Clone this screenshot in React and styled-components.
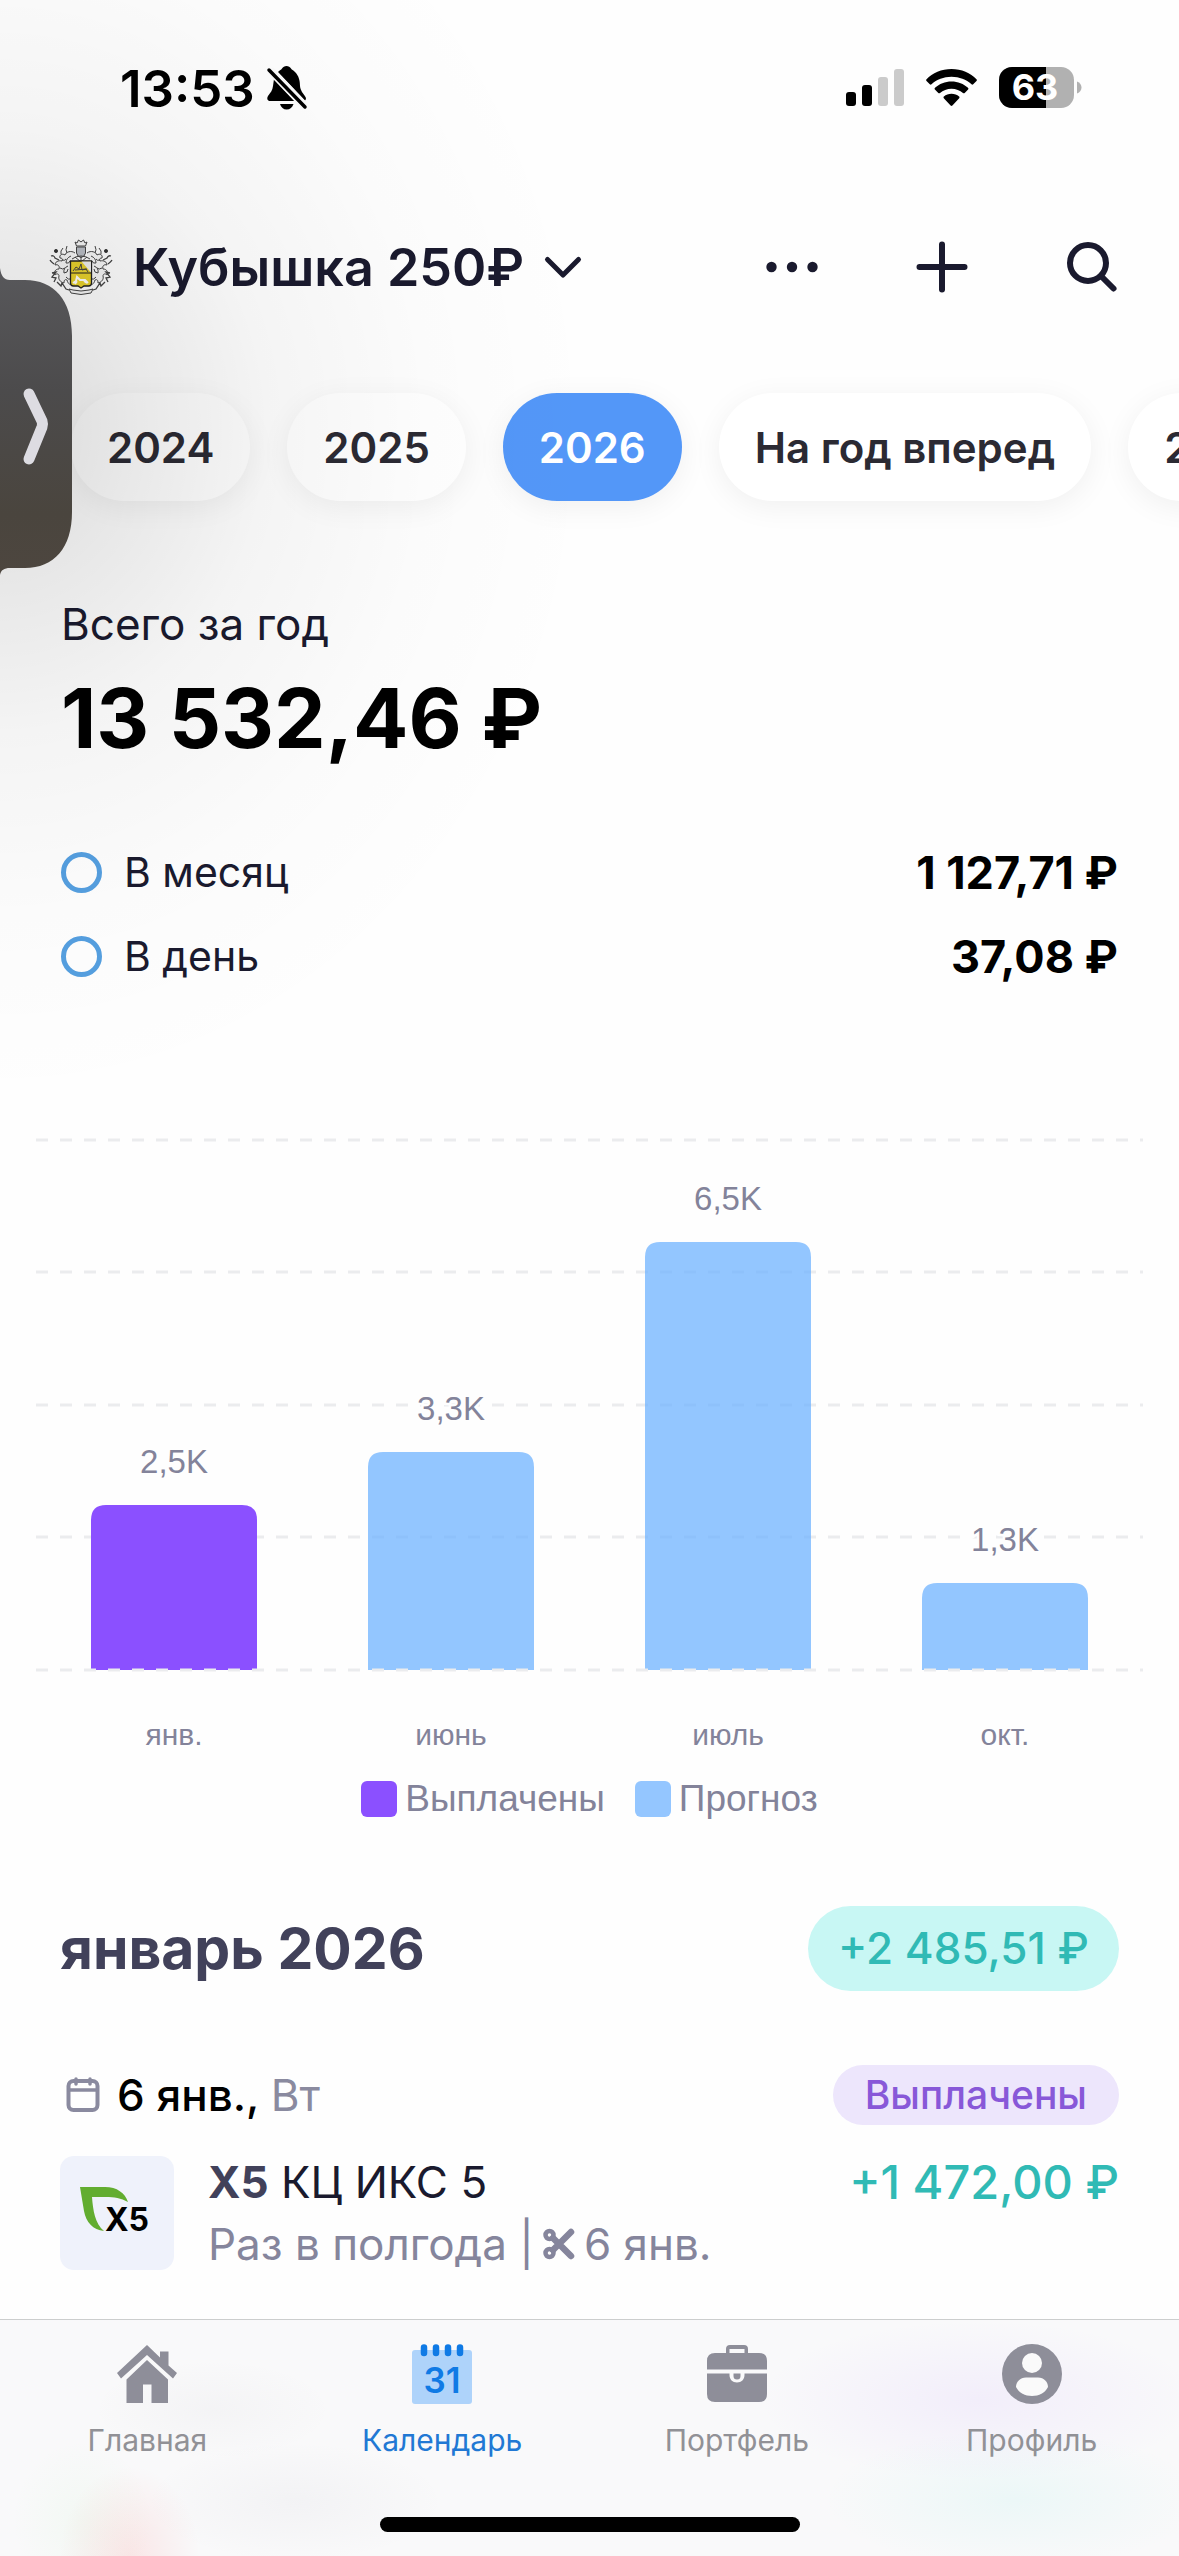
import React, { useState } from "react";
import styled, { createGlobalStyle } from "styled-components";

const years = ["2024", "2025", "2026", "На год вперед", "2027"];

const averages = [
  { id: "month", label: "В месяц", value: "1 127,71 ₽" },
  { id: "day", label: "В день", value: "37,08 ₽" },
];

const gridLines = [10, 142, 275, 407, 540];

const bars = [
  { month: "янв.", label: "2,5K", height: 165, paid: true },
  { month: "июнь", label: "3,3K", height: 218 },
  { month: "июль", label: "6,5K", height: 428 },
  { month: "окт.", label: "1,3K", height: 87 },
];

const tabs = [
  { label: "Главная", icon: <HomeIcon /> },
  { label: "Календарь", icon: <CalendarTabIcon />, active: true },
  { label: "Портфель", icon: <BriefcaseIcon /> },
  { label: "Профиль", icon: <ProfileIcon /> },
];

export default function App() {
  const [year, setYear] = useState("2026");

  return (
    <>
      <GlobalStyle />
      <Page>
        <StatusBar>
          <StatusGroup $gap="12px">
            <Clock>13:53</Clock>
            <BellOffIcon />
          </StatusGroup>
          <StatusGroup $gap="22px">
            <SignalIcon />
            <WifiIcon />
            <BatteryIcon />
          </StatusGroup>
        </StatusBar>

        <Header>
          <AccountButton type="button">
            <CrestIcon />
            <AccountName>Кубышка 250₽</AccountName>
            <svg width="38" height="24" viewBox="0 0 38 24" fill="none" aria-hidden="true">
              <path d="M3.500 4.500 19 20 34.500 4.500" stroke="#1a1a2e" strokeWidth="5" strokeLinecap="round" strokeLinejoin="round" />
            </svg>
          </AccountButton>
          <Actions>
            <IconButton type="button" aria-label="Ещё">
              <svg width="52" height="52" viewBox="0 0 52 52" fill="#1a1a2e">
                <circle cx="5.500" cy="26" r="5.200" />
                <circle cx="26" cy="26" r="5.200" />
                <circle cx="46.500" cy="26" r="5.200" />
              </svg>
            </IconButton>
            <IconButton type="button" aria-label="Добавить">
              <svg width="52" height="52" viewBox="0 0 52 52" stroke="#1a1a2e" strokeWidth="6" strokeLinecap="round">
                <path d="M26 3.500v45M3.500 26h45" />
              </svg>
            </IconButton>
            <IconButton type="button" aria-label="Поиск">
              <svg width="52" height="52" viewBox="0 0 52 52" fill="none" stroke="#1a1a2e" strokeWidth="6" strokeLinecap="round">
                <circle cx="22" cy="22" r="18" />
                <path d="M36 36 47.500 47.500" />
              </svg>
            </IconButton>
          </Actions>
        </Header>

        <Years>
          {years.map((item) => (
            <YearButton key={item} type="button" $active={item === year} onClick={() => setYear(item)}>
              {item}
            </YearButton>
          ))}
        </Years>

        <Summary>
          <SummaryLabel>Всего за год</SummaryLabel>
          <SummaryTotal>13 532,46 ₽</SummaryTotal>
          <Averages>
            {averages.map((item) => (
              <AverageRow key={item.id} htmlFor={item.id}>
                <Ring type="radio" name="average" id={item.id} />
                <AverageName>{item.label}</AverageName>
                <AverageValue>{item.value}</AverageValue>
              </AverageRow>
            ))}
          </Averages>
        </Summary>

        <ChartSection>
          <Chart />
          <Legend>
            <LegendItem>
              <Swatch $color="#8b50ff" />
              Выплачены
            </LegendItem>
            <LegendItem>
              <Swatch $color="#94c6ff" />
              Прогноз
            </LegendItem>
          </Legend>
        </ChartSection>

        <Payouts>
          <MonthRow>
            <MonthTitle>январь 2026</MonthTitle>
            <MonthTotal>+2 485,51 ₽</MonthTotal>
          </MonthRow>
          <DateRow>
            <SmallCalendarIcon />
            <DateText>
              6 янв., <span>Вт</span>
            </DateText>
            <PaidBadge>Выплачены</PaidBadge>
          </DateRow>
          <PayoutRow>
            <LogoBox>
              <X5Logo />
            </LogoBox>
            <PayoutInfo>
              <PayoutLine>
                <PayoutName>
                  <b>X5</b> КЦ ИКС 5
                </PayoutName>
                <PayoutAmount>+1 472,00 ₽</PayoutAmount>
              </PayoutLine>
              <PayoutDetails>
                <span>Раз в полгода |</span>
                <ScissorsIcon />
                <span>6 янв.</span>
              </PayoutDetails>
            </PayoutInfo>
          </PayoutRow>
        </Payouts>

        <TabBar>
          <Tabs>
            {tabs.map((tab) => (
              <Tab key={tab.label} href="#" $active={tab.active}>
                {tab.icon}
                {tab.label}
              </Tab>
            ))}
          </Tabs>
          <HomeIndicator />
        </TabBar>

        <Shade />
        <DrawerHandle type="button" aria-label="Открыть панель">
          <svg width="72" height="307" viewBox="0 0 72 307">
            <defs>
              <linearGradient id="handle" x1="0" y1="0" x2="0" y2="1">
                <stop offset="0" stopColor="#58585b" />
                <stop offset="0.400" stopColor="#4c4b4c" />
                <stop offset="0.800" stopColor="#4a453e" />
                <stop offset="1" stopColor="#4d463f" />
              </linearGradient>
            </defs>
            <path
              d="M0 0C1 8 4 12 10 12H25C54 12 72 32 72 68V244C72 280 54 300 25 300H10C4 300 1 302 0 307Z"
              fill="url(#handle)"
            />
            <path d="M29 126 42 153Q43 156 42 159L29 191" fill="none" stroke="#dddce2" strokeWidth="11" strokeLinecap="round" />
          </svg>
        </DrawerHandle>
      </Page>
    </>
  );
}

function Chart() {
  return (
    <ChartSvg viewBox="0 0 1107 626" role="img" aria-label="Выплаты по месяцам">
      {gridLines.slice(0, 4).map((y) => (
        <line key={y} x1="0" x2="1107" y1={y} y2={y} stroke="#ebecee" strokeWidth="3" strokeDasharray="12 12" />
      ))}
      {bars.map((bar, i) => {
        const x = 55 + i * 277;
        const top = 540 - bar.height;
        return (
          <g key={bar.month}>
            <path
              d={`M${x} 540V${top + 15}q0-15 15-15h136q15 0 15 15V540z`}
              fill={bar.paid ? "#8b50ff" : "#6fb3ff"}
              fillOpacity={bar.paid ? 1 : 0.75}
            />
            <BarLabel x={x + 83} y={top - 32}>{bar.label}</BarLabel>
            <AxisLabel x={x + 83} y="615">{bar.month}</AxisLabel>
          </g>
        );
      })}
      <line x1="0" x2="1107" y1="540" y2="540" stroke="#ebecee" strokeWidth="3" strokeDasharray="12 12" />
    </ChartSvg>
  );
}

// Icons
function BellOffIcon() {
  return (
    <svg width="40" height="44" viewBox="0 0 40 44" aria-hidden="true">
      <path d="M11 6C13 4 14 4 15 2.500 16 1 17.500 0 19.500 0S23 1 24 2.500C25 4 26 4 28 6c4 4 5 9 5 14 .500 5 3 7 5.500 11 .800 1.500 .500 2.700-.500 3.500z" />
      <path d="M7 13 27.500 35H3C.500 35-.500 32.500 1 30c2.500-3.500 4.500-5.500 5-10z" />
      <path d="M13 38H26.500C25.500 41.500 23 43.500 19.700 43.500S14 41.500 13 38Z" />
      <path d="M3 4 38 40.500" stroke="#fbfbfb" strokeWidth="8" />
      <path d="M2 4 38 41" stroke="#000" strokeWidth="3.500" strokeLinecap="round" />
    </svg>
  );
}

function SignalIcon() {
  return (
    <svg width="58" height="38" viewBox="0 0 58 38" aria-hidden="true">
      <rect x="0" y="23" width="10" height="14" rx="3" />
      <rect x="16" y="16" width="10" height="21" rx="3" />
      <rect x="32" y="8" width="10" height="29" rx="3" fill="#cbcbcb" />
      <rect x="48" y="0" width="10" height="37" rx="3" fill="#cbcbcb" />
    </svg>
  );
}

function WifiIcon() {
  return (
    <svg width="51" height="38" viewBox="0 0 51 38" aria-hidden="true">
      <path d="M25.500 0C35.500 0 44.500 4 50.500 10.300c.500 .500 .500 1.200 0 1.700l-3.300 3.300c-.500 .500-1.200 .500-1.700 0C40.300 10.600 33.300 7.800 25.500 7.800S10.700 10.600 5.500 15.300c-.500 .500-1.200 .500-1.700 0L.500 12C0 11.500 0 10.800 .500 10.300 6.500 4 15.500 0 25.500 0z" />
      <path d="M25.500 12.500c6.400 0 12.200 2.400 16.500 6.300 .500 .500 .600 1.200 .100 1.700l-3.400 3.400c-.500 .500-1.200 .500-1.700 .100-3-2.700-7.100-4.300-11.500-4.300s-8.500 1.600-11.500 4.300c-.500 .400-1.200 .400-1.700-.100L8.900 20.500c-.500-.500-.400-1.200 .100-1.700C13.300 14.900 19.100 12.500 25.500 12.500z" />
      <path d="M25.500 24.800c2.900 0 5.600 1 7.600 2.700 .500 .400 .500 1.200 .100 1.700l-6.800 7.300c-.500 .500-1.300 .500-1.800 0l-6.800-7.300c-.400-.500-.400-1.300 .100-1.700 2-1.700 4.700-2.700 7.600-2.700z" />
    </svg>
  );
}

function BatteryIcon() {
  return (
    <svg width="83" height="42" viewBox="0 0 83 42" role="img" aria-label="63%">
      <defs>
        <clipPath id="battery">
          <rect width="75" height="41" rx="13" />
        </clipPath>
      </defs>
      <g clipPath="url(#battery)">
        <rect width="75" height="41" fill="#b1b1b1" />
        <rect width="47" height="41" />
      </g>
      <path d="M78 14.500c3 1 4.500 3.500 4.500 6s-1.500 5-4.500 6z" fill="#b1b1b1" />
      <BatteryText x="36" y="33">63</BatteryText>
    </svg>
  );
}

function CrestIcon() {
  return (
    <svg width="64" height="56" viewBox="0 0 64 56" fill="none" stroke="#444" strokeWidth="1" aria-hidden="true">
      <g fill="#f6f6f6">
        <path d="M26 3l2 1 1.500-3 2.500 2 2.500-2L36 4l2-1-1.500 4h-9z" />
        <path d="M27.500 8h9v6q-1 4-4.500 4.500Q28.500 18 27.500 14z" fill="#b9bdc4" />
        <path d="M26 14c-4-3-9-1-10 2-3-2-6 0-5 3 2 0 3 1 2 3-4-1-7 1-7 4 3-1 5 1 4 4-4 0-5 3-4 6 2-2 4-1 4 1-1 3 1 6 5 7 0-3 1-4 3-3 1 4 3 5 5 4" />
        <path d="M38 14c4-3 9-1 10 2 3-2 6 0 5 3-2 0-3 1-2 3 4-1 7 1 7 4-3-1-5 1-4 4 4 0 5 3 4 6-2-2-4-1-4 1 1 3-1 6-5 7 0-3-1-4-3-3-1 4-3 5-5 4" />
      </g>
      <path d="M22 17q-5 2-5 7 3 1 4-2M19 27q-5 2-4 7 4 0 4-4M17 38q2 3 5 2M13 21q3 1 4-1M11 29q3 2 5 0M42 17q5 2 5 7-3 1-4-2M45 27q5 2 4 7-4 0-4-4M47 38q-2 3-5 2M51 21q-3 1-4-1M53 29q-3 2-5 0" />
      <path d="M2 17q3-1 4 2l4 2M5 25q-3-2-4-4M3 34l4-1-4 5 4 1-2 4M62 17q-3-1-4 2l-4 2M59 25q3-2 4-4M61 34l-4-1 4 5-4 1 2 4M8 43l4 4 1-3 4 6 3 1M56 43l-4 4-1-3-4 6-3 1" strokeWidth="1.300" />
      <path d="M14 9q-3 3-2 6M18 7q-2 4 0 7M50 9q3 3 2 6M46 7q2 4 0 7" />
      <path d="M23 20q4-3 9-3t9 3M26 18l6 5 6-5M32 18v5" />
      <circle cx="7" cy="12" r="1.600" fill="#333" />
      <circle cx="57" cy="12" r="1.600" fill="#333" />
      <path d="M21.500 22h21v22q0 3-3 3H35l-3 2-3-2h-4.500q-3 0-3-3z" fill="#e8d22c" stroke="#222" strokeWidth="1.300" />
      <path d="M32.500 22.500H42v11z" fill="#eee" stroke="none" />
      <path d="M21.500 34h21" stroke="#222" />
      <path d="M24 32l3-4 3 2 2-5 1 6 4-1 2 3M26 31l12-1" />
      <path d="M24 44l3-2 1-4 3 3h5l3 3M28 42l-2 3M35 42l3 2" stroke="#fff" strokeWidth="2" />
      <path d="M20 50l4 1q8 2 16 0l4-1-2 4q-10 3-20 0z" fill="#f6f6f6" />
    </svg>
  );
}

function SmallCalendarIcon() {
  return (
    <svg width="34" height="36" viewBox="0 0 34 36" fill="none" stroke="#8a8a9f" strokeWidth="4" strokeLinecap="round" aria-hidden="true">
      <rect x="2.500" y="4" width="29" height="29" rx="5" />
      <path d="M3 13H31M10 2V7M24 2V7" strokeWidth="3.500" />
    </svg>
  );
}

function X5Logo() {
  return (
    <svg width="114" height="114" viewBox="0 0 114 114" role="img" aria-label="X5">
      <path d="M20 31H45C57 31 65 37 68 46 61 42 54 41 46 41H32C33 54 35 68 44 75 33 74 26 66 24 55Z" fill="#62ad30" />
      <LogoText x="67" y="75">X5</LogoText>
    </svg>
  );
}

function ScissorsIcon() {
  return (
    <svg width="32" height="32" viewBox="0 0 32 32" fill="none" stroke="#85859c" strokeLinecap="round" aria-hidden="true">
      <circle cx="6.500" cy="7" r="4" strokeWidth="4.500" />
      <circle cx="6.500" cy="25" r="4" strokeWidth="4.500" />
      <path d="M10 10 28 28M10 22 28 4" strokeWidth="6.500" />
    </svg>
  );
}

function HomeIcon() {
  return (
    <svg width="60" height="60" viewBox="0 0 60 60" fill="#8e8e99" aria-hidden="true">
      <path d="M30 1 43 13.500V7.500H51.500V21.500L60 29 56 34.500 30 11 4 34.500 0 29Z" />
      <path d="M30 16 51 35.500V59H34.500V40.500H26V59H9.500V35.500Z" />
    </svg>
  );
}

function CalendarTabIcon() {
  return (
    <svg width="60" height="60" viewBox="0 0 60 60" aria-hidden="true">
      <rect y="6" width="60" height="54" rx="3" fill="#aed3fa" />
      <path d="M12 3.500V9M24 3.500V9M36 3.500V9M48 3.500V9" stroke="#0f7ae5" strokeWidth="6.500" strokeLinecap="round" />
      <CalendarText x="30" y="49">31</CalendarText>
    </svg>
  );
}

function BriefcaseIcon() {
  return (
    <svg width="60" height="60" viewBox="0 0 60 60" fill="#8e8e99" aria-hidden="true">
      <path d="M19 9V5Q19 1 23 1H37Q41 1 41 5V9H52Q60 9 60 17V25.500H0V17Q0 9 8 9ZM22.500 9H37.500V5H22.500Z" fillRule="evenodd" />
      <path d="M0 29.500H22.500V31C22.500 35.500 25.500 38.500 30 38.500S37.500 35.500 37.500 31V29.500H60V50Q60 58 52 58H8Q0 58 0 50Z" />
      <path d="M26.500 29.500H33.500V32Q33.500 35.500 30 35.500T26.500 32Z" />
    </svg>
  );
}

function ProfileIcon() {
  return (
    <svg width="60" height="60" viewBox="0 0 60 60" aria-hidden="true">
      <circle cx="30" cy="30" r="30" fill="#8e8e99" />
      <circle cx="30" cy="19" r="10" fill="#fafafa" />
      <path d="M24 33.500H36C42 33.500 46 38 46 43 43 49 37 52 30 52S17 49 14 43C14 38 18 33.500 24 33.500Z" fill="#fafafa" />
    </svg>
  );
}

const GlobalStyle = createGlobalStyle`
  *, *::before, *::after {
    box-sizing: border-box;
  }
  body {
    margin: 0;
    background: #fefefe;
    font-family: Inter, "Liberation Sans", sans-serif;
    color: #1a1a2e;
  }
  button {
    border: 0;
    padding: 0;
    background: none;
    font: inherit;
    color: inherit;
    cursor: pointer;
  }
  svg {
    display: block;
    flex-shrink: 0;
    overflow: visible;
  }
`;

const Page = styled.main`
  position: relative;
  display: flex;
  flex-direction: column;
  min-height: 100vh;
  overflow: hidden;
`;

const StatusBar = styled.div`
  display: flex;
  justify-content: space-between;
  align-items: center;
  height: 176px;
  padding: 0 97px 0 120px;
`;

const StatusGroup = styled.div`
  display: flex;
  align-items: center;
  gap: ${(props) => props.$gap};
`;

const Clock = styled.span`
  font-size: 51px;
  font-weight: 600;
  color: #000;
`;

const BatteryText = styled.text`
  font-size: 36px;
  font-weight: 700;
  fill: #fff;
  text-anchor: middle;
`;

const Header = styled.header`
  display: flex;
  justify-content: space-between;
  align-items: center;
  height: 182px;
  padding: 0 61px 0 49px;
`;

const AccountButton = styled.button`
  display: flex;
  align-items: center;
  gap: 20px;
`;

const AccountName = styled.span`
  font-size: 52px;
  font-weight: 600;
`;

const Actions = styled.div`
  display: flex;
  gap: 98px;
`;

const IconButton = styled.button`
  display: flex;
`;

const Years = styled.div`
  display: flex;
  gap: 37px;
  padding: 35px 0 35px 71px;
  overflow: hidden;
`;

const YearButton = styled.button`
  flex-shrink: 0;
  height: 108px;
  padding: 0 36px;
  border-radius: 54px;
  background: ${(props) => (props.$active ? "#5397f8" : "#fff")};
  color: ${(props) => (props.$active ? "#fff" : "#2b2a33")};
  font-size: 42px;
  font-weight: 600;
  box-shadow: 0 6px 30px rgba(0, 0, 0, 0.06);
`;

const Summary = styled.section`
  padding: 62px 61px 0;
`;

const SummaryLabel = styled.h2`
  margin: 0;
  font-size: 44px;
  line-height: 52px;
  font-weight: 400;
`;

const SummaryTotal = styled.p`
  margin: 21px 0 0;
  font-size: 82px;
  line-height: 96px;
  font-weight: 700;
  color: #000;
`;

const Averages = styled.div`
  margin-top: 63px;
`;

const AverageRow = styled.label`
  display: flex;
  align-items: center;
  height: 84px;
`;

const Ring = styled.input`
  appearance: none;
  width: 41px;
  height: 41px;
  margin: 0 22px 0 0;
  border: 5px solid #559fe0;
  border-radius: 50%;
`;

const AverageName = styled.span`
  font-size: 41px;
`;

const AverageValue = styled.span`
  margin-left: auto;
  font-size: 45px;
  font-weight: 700;
  color: #000;
`;

const ChartSection = styled.section`
  padding: 132px 36px 0;
`;

const ChartSvg = styled.svg`
  width: 100%;
  height: auto;
`;

const BarLabel = styled.text`
  font-family: "Liberation Sans", sans-serif;
  font-size: 33px;
  fill: #83839a;
  stroke: #fefefe;
  stroke-width: 5px;
  paint-order: stroke;
  text-anchor: middle;
`;

const AxisLabel = styled.text`
  font-family: "Liberation Sans", sans-serif;
  font-size: 30px;
  fill: #83839a;
  text-anchor: middle;
`;

const Legend = styled.div`
  display: flex;
  justify-content: center;
  gap: 30px;
  margin-top: 21px;
`;

const LegendItem = styled.div`
  display: flex;
  align-items: center;
  gap: 8px;
  font-family: "Liberation Sans", sans-serif;
  font-size: 37px;
  line-height: 44px;
  color: #83839a;
`;

const Swatch = styled.span`
  width: 36px;
  height: 36px;
  border-radius: 6px;
  background: ${(props) => props.$color};
`;

const Payouts = styled.section`
  padding: 85px 60px 44px;
`;

const MonthRow = styled.div`
  display: flex;
  justify-content: space-between;
  align-items: center;
`;

const MonthTitle = styled.h2`
  margin: 0;
  font-size: 57px;
  font-weight: 700;
  color: #41415a;
`;

const MonthTotal = styled.span`
  padding: 0 30px;
  border-radius: 43px;
  background: #c8f7f4;
  color: #30bab5;
  font-size: 44px;
  line-height: 85px;
  font-weight: 500;
`;

const DateRow = styled.div`
  display: flex;
  align-items: center;
  margin-top: 74px;
  padding-left: 6px;
`;

const DateText = styled.span`
  margin-left: 17px;
  font-size: 44px;
  font-weight: 500;
  color: #000;

  span {
    font-weight: 400;
    color: #8a8a9f;
  }
`;

const PaidBadge = styled.span`
  margin-left: auto;
  padding: 0 32px;
  border-radius: 30px;
  background: #ede6fc;
  color: #8858d8;
  font-size: 39px;
  line-height: 60px;
  font-weight: 500;
`;

const PayoutRow = styled.article`
  display: flex;
  align-items: center;
  gap: 34px;
  margin-top: 26px;
`;

const LogoBox = styled.div`
  border-radius: 14px;
  background: #eff2fb;
`;

const LogoText = styled.text`
  font-size: 32px;
  font-weight: 700;
  text-anchor: middle;
`;

const PayoutInfo = styled.div`
  flex: 1;
  line-height: 62px;
`;

const PayoutLine = styled.div`
  display: flex;
  justify-content: space-between;
`;

const PayoutName = styled.span`
  font-size: 44px;

  b {
    color: #41415a;
  }
`;

const PayoutAmount = styled.span`
  font-size: 47px;
  font-weight: 500;
  color: #30bab5;
`;

const PayoutDetails = styled.div`
  display: flex;
  align-items: center;
  gap: 9px;
  font-size: 44px;
  color: #85859c;
`;

const TabBar = styled.nav`
  display: flex;
  flex-direction: column;
  align-items: center;
  justify-content: space-between;
  height: 237px;
  margin-top: auto;
  padding: 24px 0;
  border-top: 1px solid #cccece;
  background:
    radial-gradient(70px 90px at 11% 100%, rgba(255, 90, 90, 0.12), transparent),
    radial-gradient(70px 80px at 7% 85%, rgba(120, 230, 120, 0.05), transparent),
    radial-gradient(150px 60px at 25% 77%, rgba(80, 80, 110, 0.04), transparent),
    radial-gradient(120px 50px at 18% 38%, rgba(80, 80, 100, 0.03), transparent),
    radial-gradient(220px 80px at 83% 34%, rgba(150, 90, 255, 0.07), transparent),
    radial-gradient(190px 70px at 86% 76%, rgba(60, 220, 210, 0.07), transparent),
    #f9f9fa;
`;

const Tabs = styled.div`
  display: flex;
  width: 100%;
`;

const Tab = styled.a`
  flex: 1;
  display: flex;
  flex-direction: column;
  align-items: center;
  gap: 16px;
  font-size: 30px;
  line-height: 40px;
  color: ${(props) => (props.$active ? "#2178d4" : "#919196")};
  text-decoration: none;
`;

const CalendarText = styled.text`
  font-size: 35px;
  font-weight: 600;
  fill: #0f7ae5;
  text-anchor: middle;
`;

const HomeIndicator = styled.div`
  width: 420px;
  max-width: 60%;
  height: 15px;
  border-radius: 8px;
  background: #000;
`;

const Shade = styled.div`
  position: absolute;
  inset: 0;
  background: radial-gradient(
    600px 680px at 0 430px,
    rgba(0, 0, 0, 0.15),
    rgba(0, 0, 0, 0.09) 22%,
    rgba(0, 0, 0, 0.04) 45%,
    rgba(0, 0, 0, 0.012) 72%,
    transparent
  );
  pointer-events: none;
`;

const DrawerHandle = styled.button`
  position: absolute;
  top: 268px;
  left: 0;
`;
